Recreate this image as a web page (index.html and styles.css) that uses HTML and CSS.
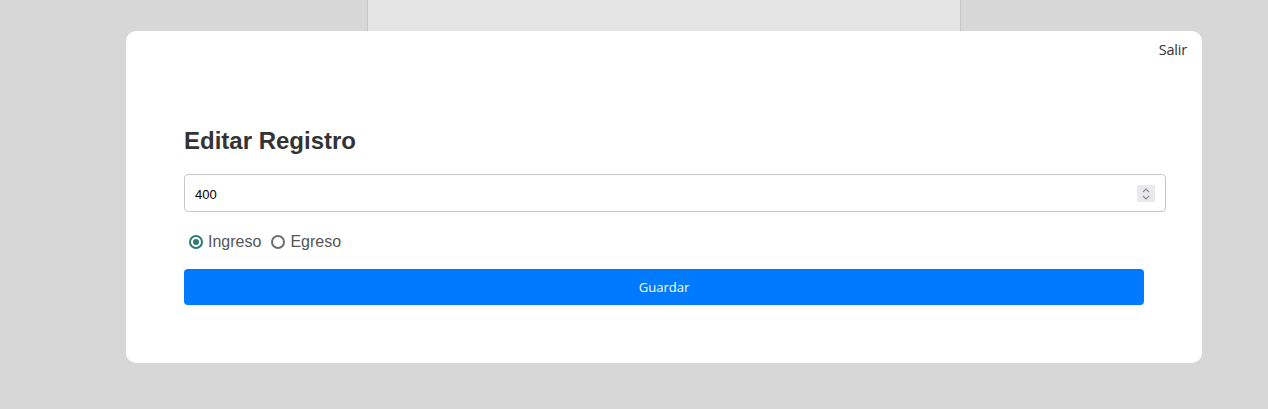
FILE: index.html
```html
<!DOCTYPE html>
<html lang="es">
<head>
<meta charset="utf-8">
<title>Editar Registro</title>
<link rel="stylesheet" href="styles.css">
</head>
<body>
<div class="page-panel"></div>
<div class="modal">
  <div class="modal-top">
    <a class="exit" href="#">Salir</a>
  </div>
  <div class="modal-body">
    <h2 class="title">Editar Registro</h2>
    <div class="field">
      <input class="amount" type="text" value="400">
      <span class="spinner">
        <svg width="10" height="14" viewBox="0 0 10 14"><path d="M2 5 L5 2 L8 5" fill="none" stroke="#8a8a90" stroke-width="1.1"/><path d="M2 9 L5 12 L8 9" fill="none" stroke="#8a8a90" stroke-width="1.1"/></svg>
      </span>
    </div>
    <div class="radios">
      <label class="opt"><input class="radio" type="radio" name="tipo" checked>Ingreso</label>
      <label class="opt"><input class="radio" type="radio" name="tipo">Egreso</label>
    </div>
    <button class="save" type="button">Guardar</button>
  </div>
</div>
</body>
</html>
```
FILE: styles.css
```css
html, body {
  margin: 0;
  padding: 0;
}
body {
  background: #d7d7d7;
  height: 409px;
  overflow: hidden;
  position: relative;
}
.page-panel {
  position: absolute;
  left: 367px;
  top: 0;
  width: 592px;
  height: 60px;
  background: #e4e4e4;
  border-left: 1px solid #c6c6c6;
  border-right: 1px solid #c6c6c6;
}
.modal {
  position: relative;
  margin: 31px 0 0 126px;
  width: 1076px;
  height: 332px;
  background: #fff;
  border-radius: 10px;
  box-sizing: border-box;
}
.modal-top {
  display: flex;
  justify-content: flex-end;
  padding: 9px 15px 0 0;
  height: 30px;
  box-sizing: border-box;
}
.exit {
  font-family: "Open Sans", "Noto Sans", sans-serif;
  font-size: 14.5px;
  line-height: 20px;
  color: #333;
  text-decoration: none;
  letter-spacing: -0.2px;
}
.modal-body {
  padding: 0 36px 0 58px;
}
.title {
  font-family: "Liberation Sans", Arial, sans-serif;
  font-weight: bold;
  font-size: 24px;
  line-height: 28px;
  color: #333;
  margin: 66px 0 19px;
}
.field {
  position: relative;
}
.amount {
  display: block;
  width: 100%;
  height: 38px;
  box-sizing: border-box;
  border: 1px solid #c8c8c8;
  border-radius: 4px;
  padding: 2px 10px 0;
  font-family: "Liberation Sans", Arial, sans-serif;
  font-size: 13px;
  color: #000;
  outline: none;
}
.spinner {
  position: absolute;
  right: 11px;
  top: 11px;
  width: 18px;
  height: 17px;
  background: #e9e9ed;
  display: flex;
  align-items: center;
  justify-content: center;
}
.radios {
  display: flex;
  gap: 10px;
  margin-top: 20px;
  padding-left: 5px;
  font-family: "Liberation Sans", Arial, sans-serif;
  font-size: 16px;
  line-height: 19px;
  color: #555;
}
.opt {
  display: flex;
  align-items: center;
  gap: 5px;
}
.radio {
  appearance: none;
  -webkit-appearance: none;
  margin: 0;
  width: 14px;
  height: 14px;
  border: 2px solid #6e6e6e;
  border-radius: 50%;
  box-sizing: border-box;
  background: #fff;
  position: relative;
}
.radio:checked {
  border-color: #2e7a70;
}
.radio:checked::after {
  content: "";
  position: absolute;
  left: 2px;
  top: 2px;
  width: 6px;
  height: 6px;
  border-radius: 50%;
  background: #2e7a70;
}
.save {
  display: block;
  margin-top: 18px;
  width: 960px;
  height: 36px;
  border: none;
  border-radius: 4px;
  background: #007bff;
  color: #fff;
  font-family: "Open Sans", "Noto Sans", sans-serif;
  font-size: 13px;
}
```
